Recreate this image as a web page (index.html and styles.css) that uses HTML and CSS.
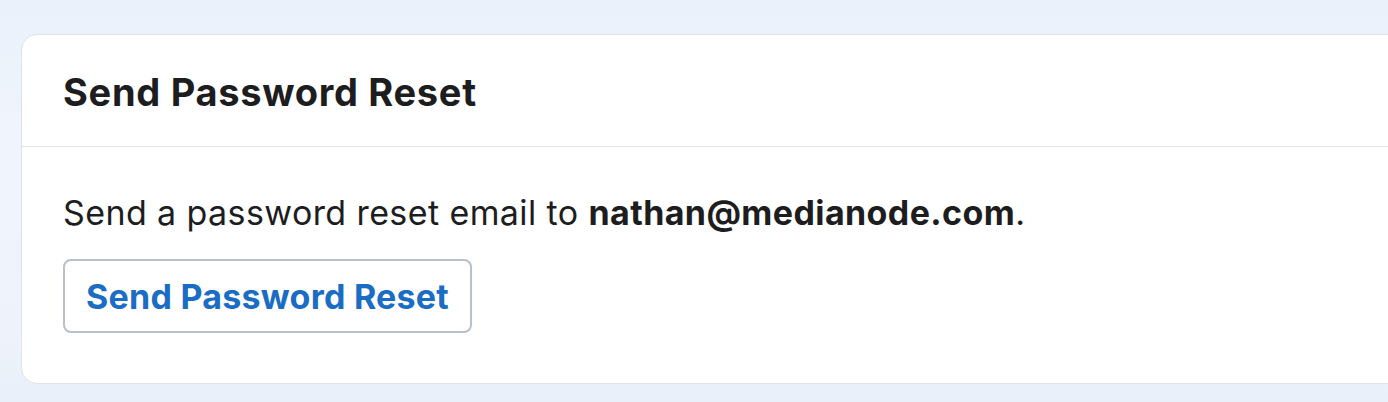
FILE: index.html
```html
<!DOCTYPE html>
<html lang="en">
<head>
    <meta charset="UTF-8">
    <meta name="viewport" content="width=device-width, initial-scale=1.0">
    <title>Send Password Reset</title>
    <link rel="stylesheet" href="styles.css">
</head>
<body>
    <div class="card">
        <div class="card-header">
            <h2>Send Password Reset</h2>
        </div>
        <div class="card-body">
            <p>Send a password reset email to <strong>nathan@medianode.com</strong>.</p>
            <button type="button">Send Password Reset</button>
        </div>
    </div>
</body>
</html>
```

FILE: styles.css
```css
html, body {
    height: 100%;
}
body {
    margin: 0;
    padding: 34px 0 0 21px;
    box-sizing: border-box;
    overflow: hidden;
    font-family: Inter, "Noto Sans", sans-serif;
    color: #1d1d1f;
    background: linear-gradient(180deg, #eaf1fa 0%, #f0f5fd 40%, #eef3fb 80%, #e9f0f9 100%);
}
.card {
    margin-right: -40px;
    background: #fff;
    border: 1px solid #dfe3e9;
    border-radius: 16px;
}
.card-header {
    padding: 37px 41px 34px;
    border-bottom: 1px solid #e1e5eb;
}
.card-header h2 {
    margin: 0;
    font-size: 38px;
    line-height: 40px;
    font-weight: 700;
    letter-spacing: 0.7px;
}
.card-body {
    padding: 48px 41px 50px;
}
.card-body p {
    margin: 0 0 28px;
    font-size: 34px;
    line-height: 36px;
    letter-spacing: 0.4px;
}
.card-body strong {
    font-weight: 700;
}
button {
    display: block;
    height: 74px;
    padding: 0 21px;
    font-family: inherit;
    font-size: 34px;
    font-weight: 700;
    letter-spacing: 0.25px;
    color: #1a6cc4;
    background: #fff;
    border: 2px solid #bac0c8;
    border-radius: 8px;
    cursor: pointer;
}
```
